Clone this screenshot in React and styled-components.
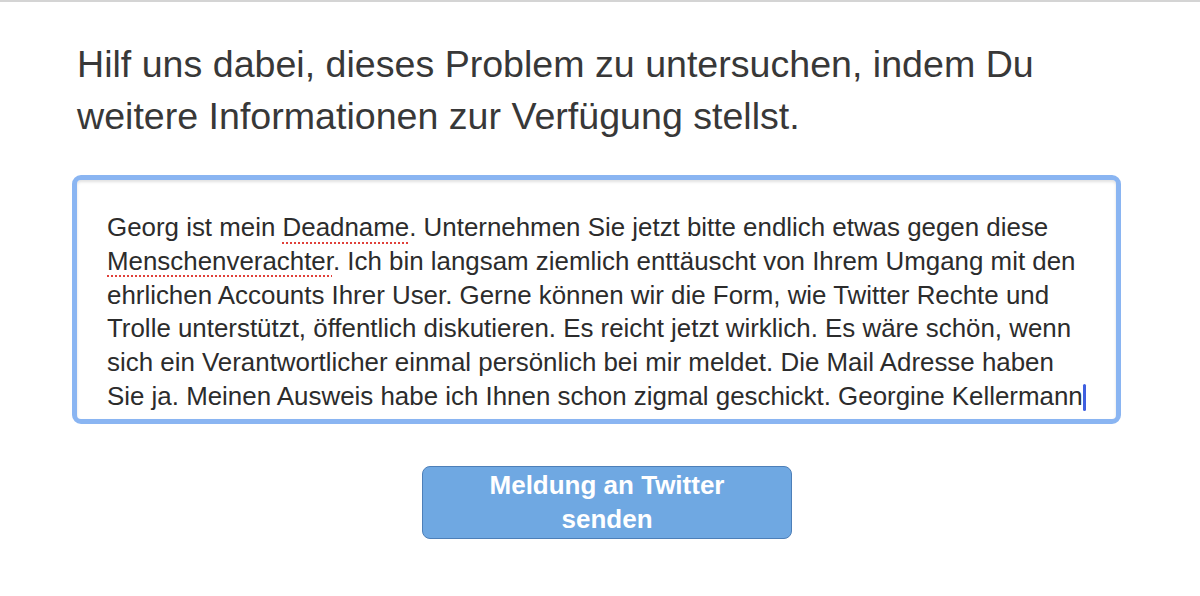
import React from "react";
import styled, { createGlobalStyle } from "styled-components";

const Global = createGlobalStyle`
  html, body { margin: 0; padding: 0; background: #fff; }
  body { font-family: "Liberation Sans", Arial, sans-serif; }
`;

const Page = styled.div`
  width: 1200px;
  height: 596px;
  box-sizing: border-box;
  border-top: 2px solid #d4d4d4;
  padding: 36px 0 0 77px;
  display: flex;
  flex-direction: column;
`;

const Heading = styled.h1`
  margin: 0;
  font-family: "Liberation Sans", Arial, sans-serif;
  font-weight: 400;
  font-size: 37.6px;
  line-height: 52px;
  color: #383838;
  white-space: nowrap;
`;

const Field = styled.div`
  margin: 33px 0 0 -5px;
  width: 1049px;
  height: 249px;
  box-sizing: border-box;
  border: 5px solid #8ab5f2;
  border-radius: 9px;
  box-shadow: inset 0 2px 3px rgba(0, 0, 0, 0.12);
  padding: 31px 0 0 30px;
  font-family: "Liberation Sans", Arial, sans-serif;
  font-size: 25.9px;
  line-height: 33.8px;
  color: #2c2c2c;
  overflow: hidden;
`;

const Line = styled.div`
  white-space: nowrap;
`;

const Misspelled = styled.span`
  text-decoration: underline dotted #e0403a;
  text-decoration-thickness: 2px;
  text-underline-offset: 6px;
`;

const Caret = styled.span`
  display: inline-block;
  width: 3px;
  height: 27px;
  background: #3e5fe0;
  border-radius: 2px;
  vertical-align: -6px;
`;

const ButtonRow = styled.div`
  display: flex;
  justify-content: center;
  width: 1060px;
  margin-top: 42px;
`;

const SendButton = styled.button`
  width: 370px;
  height: 73px;
  box-sizing: border-box;
  background: #6fa8e2;
  border: 1.5px solid #4d7fb8;
  border-radius: 8px;
  color: #fff;
  font-family: "Liberation Sans", Arial, sans-serif;
  font-weight: 700;
  font-size: 26px;
  line-height: 34px;
  padding: 0 0 2px;
  cursor: pointer;
`;

export default function App() {
  return (
    <>
      <Global />
      <Page>
        <Heading>
          Hilf uns dabei, dieses Problem zu untersuchen, indem Du
          <br />
          weitere Informationen zur Verfügung stellst.
        </Heading>
        <Field>
          <Line>
            Georg ist mein <Misspelled>Deadname</Misspelled>. Unternehmen Sie jetzt bitte endlich etwas gegen diese
          </Line>
          <Line>
            <Misspelled>Menschenverachter</Misspelled>. Ich bin langsam ziemlich enttäuscht von Ihrem Umgang mit den
          </Line>
          <Line>ehrlichen Accounts Ihrer User. Gerne können wir die Form, wie Twitter Rechte und</Line>
          <Line>Trolle unterstützt, öffentlich diskutieren. Es reicht jetzt wirklich. Es wäre schön, wenn</Line>
          <Line>sich ein Verantwortlicher einmal persönlich bei mir meldet. Die Mail Adresse haben</Line>
          <Line>
            Sie ja. Meinen Ausweis habe ich Ihnen schon zigmal geschickt. Georgine Kellermann
            <Caret />
          </Line>
        </Field>
        <ButtonRow>
          <SendButton>
            Meldung an Twitter
            <br />
            senden
          </SendButton>
        </ButtonRow>
      </Page>
    </>
  );
}
